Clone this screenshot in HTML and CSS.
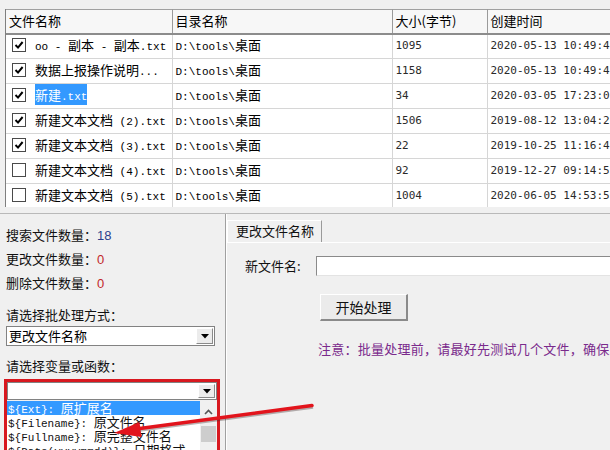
FILE: index.html
```html
<!DOCTYPE html>
<html lang="zh-CN">
<head>
<meta charset="utf-8">
<title>批量文件处理</title>
<link rel="stylesheet" href="styles.css">
</head>
<body>
<div class="app">
  <div class="topstrip"></div>
  <div class="grid">
    <table>
      <colgroup><col class="c1"><col class="c2"><col class="c3"><col class="c4"></colgroup>
      <thead>
        <tr><th>文件名称</th><th>目录名称</th><th>大小(字节)</th><th>创建时间</th></tr>
      </thead>
      <tbody>
        <tr>
          <td><span class="cb"><svg viewBox="0 0 12 12"><polyline points="2.5,6 5,8.6 9.6,3"/></svg></span><span class="m">oo - </span>副本<span class="m"> - </span>副本<span class="m">.txt</span></td>
          <td><span class="m">D:\tools\</span>桌面</td><td class="num">1095</td><td class="num">2020-05-13 10:49:4</td>
        </tr>
        <tr>
          <td><span class="cb"><svg viewBox="0 0 12 12"><polyline points="2.5,6 5,8.6 9.6,3"/></svg></span>数据上报操作说明<span class="m">...</span></td>
          <td><span class="m">D:\tools\</span>桌面</td><td class="num">1158</td><td class="num">2020-05-13 10:49:4</td>
        </tr>
        <tr>
          <td><span class="cb"><svg viewBox="0 0 12 12"><polyline points="2.5,6 5,8.6 9.6,3"/></svg></span><span class="sel">新建<span class="m">.txt</span></span></td>
          <td><span class="m">D:\tools\</span>桌面</td><td class="num">34</td><td class="num">2020-03-05 17:23:0</td>
        </tr>
        <tr>
          <td><span class="cb"><svg viewBox="0 0 12 12"><polyline points="2.5,6 5,8.6 9.6,3"/></svg></span>新建文本文档<span class="m"> (2).txt</span></td>
          <td><span class="m">D:\tools\</span>桌面</td><td class="num">1506</td><td class="num">2019-08-12 13:04:2</td>
        </tr>
        <tr>
          <td><span class="cb"><svg viewBox="0 0 12 12"><polyline points="2.5,6 5,8.6 9.6,3"/></svg></span>新建文本文档<span class="m"> (3).txt</span></td>
          <td><span class="m">D:\tools\</span>桌面</td><td class="num">22</td><td class="num">2019-10-25 11:16:4</td>
        </tr>
        <tr>
          <td><span class="cb"></span>新建文本文档<span class="m"> (4).txt</span></td>
          <td><span class="m">D:\tools\</span>桌面</td><td class="num">92</td><td class="num">2019-12-27 09:14:5</td>
        </tr>
        <tr>
          <td><span class="cb"></span>新建文本文档<span class="m"> (5).txt</span></td>
          <td><span class="m">D:\tools\</span>桌面</td><td class="num">1004</td><td class="num">2020-06-05 14:53:5</td>
        </tr>
      </tbody>
    </table>
  </div>
  <div class="split"></div>
  <div class="bottom">
    <div class="left">
      <div class="stat">搜索文件数量：<span class="blue">18</span></div>
      <div class="stat">更改文件数量：<span class="red">0</span></div>
      <div class="stat">删除文件数量：<span class="red">0</span></div>
      <div class="lbl first">请选择批处理方式：</div>
      <div class="combo outer">
        <span class="val">更改文件名称</span>
        <span class="dd"><svg viewBox="0 0 8 5"><polygon points="0,0 8,0 4,4.5"/></svg></span>
      </div>
      <div class="lbl">请选择变量或函数：</div>
      <div class="redbox">
        <div class="combo inner">
          <span class="val"></span>
          <span class="dd"><svg viewBox="0 0 8 5"><polygon points="0,0 8,0 4,4.5"/></svg></span>
        </div>
        <div class="list">
          <div class="items">
            <div class="it on"><span class="m">${Ext}: </span>原扩展名</div>
            <div class="it"><span class="m">${Filename}: </span>原文件名</div>
            <div class="it"><span class="m">${Fullname}: </span>原完整文件名</div>
            <div class="it"><span class="m">${Date(yyyymmdd)}: </span>日期格式</div>
          </div>
          <div class="sb">
            <span class="up"><svg viewBox="0 0 9 6"><polyline points="1,5 4.5,1.5 8,5"/></svg></span>
            <span class="thumb"></span>
          </div>
        </div>
      </div>
    </div>
    <div class="right">
      <div class="tabs"><div class="tab">更改文件名称</div></div>
      <div class="page">
        <div class="row">
          <span class="flabel">新文件名:</span>
          <span class="input"></span>
        </div>
        <div class="btn">开始处理</div>
        <div class="note">注意：批量处理前，请最好先测试几个文件，确保处理结果正确。</div>
      </div>
    </div>
  </div>
  <svg class="arrow" viewBox="0 0 610 450" width="610" height="450">
    <line x1="313" y1="407" x2="136" y2="430.5" class="shadow"/>
    <line x1="312" y1="405.5" x2="136" y2="429" class="shaft"/>
    <polygon points="114,433 141.5,437 139.5,422" class="head"/>
  </svg>
</div>
</body>
</html>
```
FILE: styles.css
```css
* { box-sizing: border-box; margin: 0; padding: 0; }
html, body { width: 610px; height: 450px; overflow: hidden; }
body {
  background: #f0f0f0;
  font-family: "Noto Sans CJK SC", "Liberation Sans", sans-serif;
  font-size: 13px;
  color: #000;
}
.app { position: relative; width: 610px; height: 450px; overflow: hidden; }
.m { font-family: "Liberation Mono", "Noto Sans CJK SC", monospace; font-size: 11px; }

.topstrip { height: 9px; background: #f0f0f0; }

.grid {
  height: 198px;
  overflow: hidden;
  margin-left: 5px;
  border-left: 1px solid #7f7f7f;
  background: #fff;
}
.grid table { width: 640px; table-layout: fixed; border-collapse: collapse; }
.c1 { width: 166px; }
.c2 { width: 220px; }
.c3 { width: 95px; }
.c4 { width: 159px; }
.grid th {
  height: 24px;
  background: #f7f7f7;
  border-top: 1px solid #a0a0a0;
  border-bottom: 2px solid #8c8c8c;
  border-right: 1px solid #9a9a9a;
  font-weight: normal;
  text-align: left;
  padding-left: 3px;
  line-height: 20px;
  white-space: nowrap;
  overflow: hidden;
}
.grid td {
  height: 25px;
  border-bottom: 1px solid #d6d6d6;
  border-right: 1px solid #d6d6d6;
  padding-left: 3px;
  white-space: nowrap;
  overflow: hidden;
  line-height: 18px;
  vertical-align: middle;
}
.grid td.num {
  font-family: "DejaVu Sans Mono", monospace;
  font-size: 11px;
  color: #2a2a2a;
}
.cb {
  display: inline-block;
  width: 14px;
  height: 14px;
  border: 1px solid #4a4a4a;
  background: #fff;
  vertical-align: -2px;
  margin: 0 9px 0 3px;
}
.cb svg { display: block; width: 12px; height: 12px; }
.cb polyline { fill: none; stroke: #000; stroke-width: 2; }
.sel { background: #3399ff; color: #fff; padding: 1px 0; }

.split { height: 6px; }

.bottom {
  display: flex;
  height: 237px;
  border-top: 1px solid #b9b9b9;
}
.left {
  flex: 0 0 226px;
  width: 226px;
  border-right: 1px solid #a0a0a0;
  padding-top: 9px;
}
.stat { height: 24px; line-height: 24px; padding-left: 6px; color: #111; }
.blue { color: #2b3f8c; font-family: "Liberation Sans", sans-serif; }
.red { color: #c2282a; font-family: "Liberation Sans", sans-serif; }
.lbl { height: 22px; line-height: 22px; padding-left: 6px; margin-top: 9px; color: #111; }
.lbl.first { margin-top: 9px; }

.combo {
  display: flex;
  height: 20px;
  background: #fff;
  border: 1px solid #828282;
}
.combo.outer { width: 209px; margin-left: 6px; }
.combo.inner { height: 18px; }
.combo .val { flex: 1; padding-left: 2px; line-height: 18px; }
.combo .dd {
  width: 17px;
  margin: 1px;
  background: #ececec;
  border: 1px solid #fff;
  border-right-color: #8a8a8a;
  border-bottom-color: #8a8a8a;
  display: flex;
  align-items: center;
  justify-content: center;
}
.combo .dd svg { width: 8px; height: 5px; display: block; }
.combo .dd polygon { fill: #000; }

.redbox {
  margin: 2px 0 0 4px;
  width: 216px;
  height: 80px;
  border: 3px solid #d8181f;
  border-bottom: none;
  overflow: hidden;
}
.list { display: flex; margin-top: 1px; background: #fff; height: 60px; }
.items { flex: 1; overflow: hidden; }
.it { height: 14px; line-height: 14px; white-space: nowrap; padding-left: 1px; color: #111; }
.it.on { background: #3399ff; color: #fff; }
.sb { width: 17px; background: #f0f0f0; display: flex; flex-direction: column; align-items: center; }
.sb .up { height: 22px; display: flex; align-items: center; justify-content: center; }
.sb .up svg { width: 9px; height: 6px; }
.sb .up polyline { fill: none; stroke: #555; stroke-width: 1.6; }
.sb .thumb { width: 15px; height: 16px; margin-top: 3px; background: #cdcdcd; }

.right { flex: 1 1 auto; min-width: 0; border-left: 1px solid #fff; padding-top: 6px; overflow: hidden; }
.tabs { display: flex; height: 22px; }
.tab {
  width: 95px;
  height: 22px;
  border-top: 1px solid #fff;
  border-left: 1px solid #fff;
  border-right: 1px solid #9a9a9a;
  padding-left: 8px;
  line-height: 20px;
  color: #111;
  background: #f0f0f0;
}
.page { border-top: 1px solid #fff; height: 200px; }
.row { display: flex; align-items: center; margin-top: 13px; padding-left: 18px; }
.flabel { width: 71px; line-height: 20px; color: #111; }
.input {
  flex: 1;
  height: 20px;
  background: #fff;
  border-top: 1px solid #8a8a8a;
  border-left: 1px solid #8a8a8a;
  border-bottom: 1px solid #e3e3e3;
}
.btn {
  margin: 18px 0 0 93px;
  width: 88px;
  height: 27px;
  background: #ebebeb;
  border: 1px solid #fff;
  border-right: 2px solid #8a8a8a;
  border-bottom: 2px solid #8a8a8a;
  text-align: center;
  line-height: 24px;
  font-size: 14px;
  color: #111;
}
.note {
  margin: 19px 0 0 91px;
  height: 18px;
  line-height: 18px;
  white-space: nowrap;
  letter-spacing: 0.25px;
  color: #7a2a8c;
}

.arrow { position: absolute; left: 0; top: 0; pointer-events: none; }
.arrow .shadow { stroke: rgba(60, 40, 40, 0.35); stroke-width: 3.5; }
.arrow .shaft { stroke: #e2141c; stroke-width: 3.5; stroke-linecap: round; }
.arrow .head { fill: #e2141c; }
```
